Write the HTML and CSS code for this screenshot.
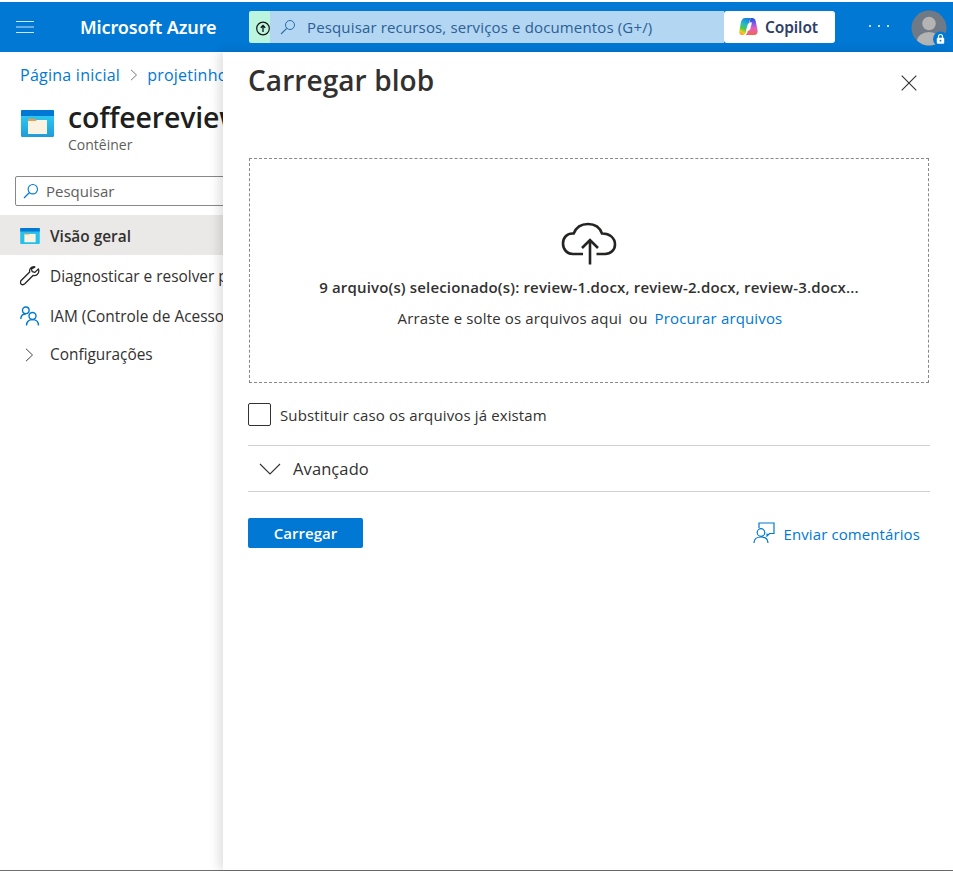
FILE: index.html
```html
<!DOCTYPE html>
<html lang="pt-BR">
<head>
<meta charset="utf-8">
<title>Carregar blob</title>
<link rel="stylesheet" href="styles.css">
</head>
<body>
<div class="page">
  <header class="topbar">
    <button class="menu" aria-label="Menu"><svg width="18" height="14" viewBox="0 0 18 14"><path d="M0 1.500h18M0 7h18M0 12.500h18" stroke="#cfe4f7" stroke-width="1.200" fill="none"/></svg></button>
    <div class="brand">Microsoft Azure</div>
    <div class="searchgroup">
      <div class="mint"><svg width="15" height="15" viewBox="0 0 15 15"><circle cx="8" cy="7.500" r="6.300" fill="none" stroke="#111" stroke-width="1.200"/><path d="M8 11V4.500M5.800 6.700 8 4.500l2.200 2.200" fill="none" stroke="#111" stroke-width="1.300"/></svg></div>
      <div class="search">
        <svg class="lens" width="16" height="16" viewBox="0 0 16 16"><circle cx="10" cy="6" r="4.500" fill="none" stroke="#2b6cab" stroke-width="1"/><path d="M6.700 9.300 1 15" stroke="#2b6cab" stroke-width="1.100" fill="none"/></svg>
        <span>Pesquisar recursos, serviços e documentos (G+/)</span>
      </div>
    </div>
    <button class="copilot">
      <svg width="19" height="19" viewBox="0 0 19 19">
        <defs>
          <linearGradient id="cpa" x1=".6" y1="0" x2=".3" y2="1"><stop offset="0" stop-color="#1a7fe0"/><stop offset=".35" stop-color="#25b8c8"/><stop offset=".65" stop-color="#55c84a"/><stop offset=".85" stop-color="#f5cf12"/><stop offset="1" stop-color="#f2a23a"/></linearGradient>
          <linearGradient id="cpb" x1=".5" y1="0" x2=".5" y2="1"><stop offset="0" stop-color="#1650d2"/><stop offset=".3" stop-color="#7a5ae6"/><stop offset=".6" stop-color="#e35fc0"/><stop offset="1" stop-color="#f4664a"/></linearGradient>
        </defs>
        <path d="M6 1h5.500L7 15c-.6 2-1.700 3-3.500 3H3C1.200 18 0 16.600.3 14.500L1.800 6C2.300 3 3.800 1 6 1z" fill="url(#cpa)"/>
        <path d="M11.500 1h1.700c2 0 3.200 1.400 3.600 3.400l1.800 9c.4 2.500-1 4.600-3.400 4.600H6.500c1.100-.7 1.600-1.600 2-3z" fill="url(#cpb)"/>
        <path d="M11.300 5.500c1-.5 1.700 0 1.400 1.300l-1.200 4.400c-.5 1.700-1.500 2.800-3.400 2.800-.8 0-1.100-.6-.8-1.600l1.200-4.200c.4-1.400 1.500-2.200 2.800-2.700z" fill="#fff"/>
      </svg>
      <span>Copilot</span>
    </button>
    <div class="dots" aria-label="Mais"><i></i><i></i><i></i></div>
    <div class="avatar">
      <svg width="36" height="36" viewBox="0 0 36 36">
        <circle cx="18" cy="18" r="17.500" fill="#6f7a86"/>
        <clipPath id="avc"><circle cx="18" cy="18" r="17.500"/></clipPath>
        <g clip-path="url(#avc)" fill="#b4b4b4"><circle cx="18" cy="13.500" r="6.800"/><ellipse cx="18" cy="31" rx="12" ry="9"/></g>
        <circle cx="29.500" cy="29" r="7.500" fill="#0078d4"/>
        <rect x="25.800" y="27.800" width="7.400" height="6" rx="1" fill="#fff"/>
        <path d="M27.500 28v-1.500a2 2 0 0 1 4 0V28" fill="none" stroke="#fff" stroke-width="1.200"/>
        <circle cx="29.500" cy="30.700" r=".9" fill="#0078d4"/>
      </svg>
    </div>
  </header>

  <main class="workspace">
    <aside class="blade">
      <nav class="crumbs"><a>Página inicial</a><svg width="8" height="12" viewBox="0 0 8 12"><path d="M1 .8 6.500 6 1 11.200" fill="none" stroke="#777" stroke-width="1"/></svg><a>projetinho</a></nav>
      <div class="resource">
        <svg class="resicon" width="33" height="27" viewBox="0 0 33 27">
          <defs><linearGradient id="cg" x1="0" y1="0" x2="0" y2="1"><stop offset="0" stop-color="#32d4f5"/><stop offset="1" stop-color="#1e9cd8"/></linearGradient></defs>
          <rect y="0" width="33" height="27" rx="1.200" fill="url(#cg)"/>
          <path d="M0 1.200A1.200 1.200 0 0 1 1.200 0h30.600A1.200 1.200 0 0 1 33 1.200V6H0z" fill="#0078d4"/>
          <rect x="7" y="10" width="19" height="14" fill="#fbf3e2"/>
          <path d="M7 11V9.500A.7.7 0 0 1 7.700 8.800H14.500L15.500 11z" fill="#f09a4a"/>
        </svg>
        <div class="restext">
          <h1>coffeereviews</h1>
          <div class="subtitle">Contêiner</div>
        </div>
      </div>
      <div class="bladesearch">
        <svg width="16" height="16" viewBox="0 0 16 16"><circle cx="9.800" cy="6.200" r="4.700" fill="none" stroke="#0078d4" stroke-width="1.100"/><path d="M6.500 9.500 1 15" stroke="#0078d4" stroke-width="1.200" fill="none"/></svg>
        <span>Pesquisar</span>
      </div>
      <ul class="nav">
        <li class="active">
          <span class="navicon"><svg width="20" height="16" viewBox="0 0 33 27"><rect width="33" height="27" rx="1.200" fill="#28c0ea"/><path d="M0 1.200A1.200 1.200 0 0 1 1.200 0h30.600A1.200 1.200 0 0 1 33 1.200V6H0z" fill="#0078d4"/><rect x="7" y="10" width="19" height="14" fill="#fbf3e2"/><path d="M7 11V9.500H15.500V11z" fill="#f09a4a"/></svg></span>
          <span>Visão geral</span>
        </li>
        <li>
          <span class="navicon"><svg width="20" height="20" viewBox="0 0 20 20"><path d="M14.300.7c-3-.3-5.300 2.300-4.600 5.300L1.400 14.300C.2 15.500.2 17 1.100 18c1 .9 2.500.9 3.700-.2l8.200-8.300c3.200.7 6.100-1.700 5.800-5-.1-.6-.2-1.100-.4-1.600l-3.500 3.500-2.700-.8-.8-2.700L14.800 1.200c-.2-.2-.3-.4-.5-.5z" fill="none" stroke="#252423" stroke-width="1.300" stroke-linejoin="round"/></svg></span>
          <span>Diagnosticar e resolver problemas</span>
        </li>
        <li>
          <span class="navicon"><svg width="20" height="20" viewBox="0 0 20 20"><g fill="none" stroke="#0078d4" stroke-width="1.400"><circle cx="5.800" cy="4.300" r="3.300"/><path d="M.8 13c0-2.700 1.700-5 5-5"/><circle cx="12.500" cy="10" r="3.500"/><path d="M6.500 19.500c0-3.500 2.200-5.900 6-5.900s6 2.400 6 5.900"/></g></svg></span>
          <span>IAM (Controle de Acesso)</span>
        </li>
        <li class="short">
          <span class="navicon chev"><svg width="9" height="14" viewBox="0 0 9 14"><path d="M1 .8 7.500 7 1 13.200" fill="none" stroke="#444" stroke-width="1"/></svg></span>
          <span>Configurações</span>
        </li>
      </ul>
    </aside>

    <section class="panel">
      <div class="panelhead">
        <h2>Carregar blob</h2>
        <button class="close" aria-label="Fechar"><svg width="16" height="16" viewBox="0 0 16 16"><path d="M.7.7l14.600 14.600M15.300.7.700 15.300" stroke="#323130" stroke-width="1.100" fill="none"/></svg></button>
      </div>
      <div class="dropzone">
        <svg class="cloud" width="56" height="44" viewBox="0 0 56 44"><path d="M22 32H12C6 32 2 27.500 2 21.500S6 11.500 11.500 11.500h1.200C15 5.500 20.500 2 27 2c6.800 0 12 3.800 14 9.500 7.300-.3 13 4.300 13 11 0 5.500-4.300 9.500-10 9.500h-8.500" fill="none" stroke="#252423" stroke-width="2.600"/><path d="M29 42.500V18.500M21 26l8-8 8 8" fill="none" stroke="#252423" stroke-width="2.600"/></svg>
        <div class="selected">9 arquivo(s) selecionado(s): review-1.docx, review-2.docx, review-3.docx...</div>
        <div class="hint"><span>Arraste e solte os arquivos aqui</span><span>ou</span><a>Procurar arquivos</a></div>
      </div>
      <label class="check"><span class="box"></span><span>Substituir caso os arquivos já existam</span></label>
      <div class="advanced">
        <svg width="22" height="12" viewBox="0 0 22 12"><path d="M1 1l10 10L21 1" fill="none" stroke="#323130" stroke-width="1.100"/></svg>
        <span>Avançado</span>
      </div>
      <div class="actions">
        <button class="primary">Carregar</button>
        <a class="feedback">
          <svg width="24" height="22" viewBox="0 0 24 22"><g fill="none" stroke="#0078d4" stroke-width="1.200"><path d="M6 6V1h15v10.500h-4.500l-2.500 2.500v-2.500"/><circle cx="8" cy="10.500" r="3.800"/><path d="M1 21c0-3.700 2.800-6 7-6s7 2.300 7 6"/></g></svg>
          <span>Enviar comentários</span>
        </a>
      </div>
    </section>
  </main>
</div>
</body>
</html>
```
FILE: styles.css
```css
* { box-sizing: border-box; }
html, body { margin: 0; height: 100%; }
body { background: #fff; font-family: "Open Sans", "Noto Sans", sans-serif; color: #323130; overflow: hidden; }
button { font: inherit; border: 0; background: none; padding: 0; }
.page { height: 871px; display: flex; flex-direction: column; padding-top: 2px; border-bottom: 1px solid #6e6e6e; }

.topbar { height: 50px; flex: none; background: #0078d4; display: flex; align-items: center; }
.menu { width: 50px; display: flex; justify-content: center; flex: none; margin-top: -1px; }
.brand { width: 199px; flex: none; padding-left: 30px; color: #fff; font-family: "Noto Sans", sans-serif; font-size: 18px; font-weight: 600; letter-spacing: -.13px; white-space: nowrap; }
.searchgroup { display: flex; height: 32px; width: 475px; flex: none; margin-top: -1px; }
.mint { width: 21px; flex: none; background: #bbf5df; border-radius: 2px 0 0 2px; padding: 8px 0 0 6px; overflow: hidden; }
.search { flex: 1; background: #b3d6f2; display: flex; align-items: center; gap: 11px; padding-left: 10px; color: #2b5f96; font-size: 15px; letter-spacing: .15px; white-space: nowrap; }
.search span { position: relative; top: .5px; }
.lens { flex: none; }
.copilot { width: 111px; height: 32px; flex: none; margin-top: -1px; background: #fff; border-radius: 3px; display: flex; align-items: center; justify-content: center; gap: 7px; color: #2f3f66; font-family: "Noto Sans", sans-serif; font-weight: 600; font-size: 15.500px; letter-spacing: -.1px; }
.copilot svg { margin-left: -2px; }
.dots { width: 76px; flex: none; display: flex; justify-content: center; gap: 6.700px; margin-top: -2px; padding-left: 12px; }
.dots i { width: 2px; height: 2px; border-radius: 50%; background: #fff; }
.avatar { width: 36px; height: 36px; flex: none; margin-top: 1px; }
.avatar svg { display: block; }

.workspace { flex: 1; display: flex; min-height: 0; }
.blade { width: 223px; flex: none; overflow: hidden; padding-top: 12px; white-space: nowrap; }
.crumbs { display: flex; align-items: center; gap: 9px; padding-left: 20px; font-size: 16px; line-height: 22px; letter-spacing: .25px; color: #0078d4; }
.crumbs svg { flex: none; margin-left: 1px; }
.resource { display: flex; gap: 14px; padding: 15px 0 0 21px; }
.resicon { margin-top: 9px; flex: none; }
.restext h1 { margin: 0; font-size: 28.500px; line-height: 32px; font-weight: 600; color: #201f1e; letter-spacing: -.2px; }
.subtitle { font-size: 14px; line-height: 18px; margin-top: 3px; color: #605e5c; }
.bladesearch { margin: 22px 0 0 15px; width: 260px; height: 30px; border: 1px solid #8a8886; border-radius: 2px; display: flex; align-items: center; gap: 7px; padding-left: 7px; font-size: 15px; color: #605e5c; }
.nav { list-style: none; margin: 9px 0 0; padding: 0; }
.nav li { height: 40px; display: flex; align-items: center; padding: 2px 0 0 20px; font-size: 15.400px; color: #323130; }
.nav li.short { height: 37px; }
.nav li.active { background: #ebe9e7; font-weight: 600; }
.navicon { width: 30px; flex: none; display: flex; align-items: center; }
.chev { padding-left: 5px; }

.panel { flex: 1; min-width: 0; background: #fff; box-shadow: -4px 0 10px rgba(0, 0, 0, .13); padding: 0 23px 0 25px; position: relative; }
.panelhead { display: flex; justify-content: space-between; align-items: flex-start; height: 106px; }
.panelhead h2 { margin: 8px 0 0; font-size: 28px; line-height: 40px; font-weight: 600; color: #323130; letter-spacing: .08px; }
.close { margin: 23px 13px 0 0; width: 16px; height: 16px; display: block; }
.close svg { display: block; }
.dropzone { width: 680px; height: 225px; margin-left: 1px; border: 1px dashed #8a8886; display: flex; flex-direction: column; align-items: center; padding-top: 63px; }
.cloud { flex: none; }
.selected { margin-top: 11px; font-size: 15px; line-height: 20px; font-weight: 600; letter-spacing: .16px; white-space: nowrap; }
.hint { margin-top: 11px; padding-left: 2px; display: flex; gap: 7px; font-size: 15px; line-height: 20px; letter-spacing: .15px; white-space: nowrap; }
.hint a { color: #0078d4; }
.check { display: flex; align-items: center; gap: 9px; margin-top: 21px; height: 22px; font-size: 15px; letter-spacing: .13px; }
.box { width: 23px; height: 23px; margin-top: -2px; border: 1px solid #323130; border-radius: 2px; flex: none; }
.advanced { width: 682px; height: 47px; margin-top: 19px; border-top: 1px solid #d2d0ce; border-bottom: 1px solid #d2d0ce; display: flex; align-items: center; gap: 12px; padding-left: 11px; font-size: 16.500px; letter-spacing: .1px; }
.actions { width: 682px; display: flex; justify-content: space-between; align-items: center; margin-top: 26px; }
.primary { width: 115px; height: 30px; background: #0078d4; color: #fff; border-radius: 2px; font-size: 15px; font-weight: 600; letter-spacing: .05px; }
.feedback { display: flex; align-items: center; gap: 7px; color: #0078d4; font-size: 15px; letter-spacing: .1px; padding-right: 10px; }
.feedback span { position: relative; top: 1px; }
```
